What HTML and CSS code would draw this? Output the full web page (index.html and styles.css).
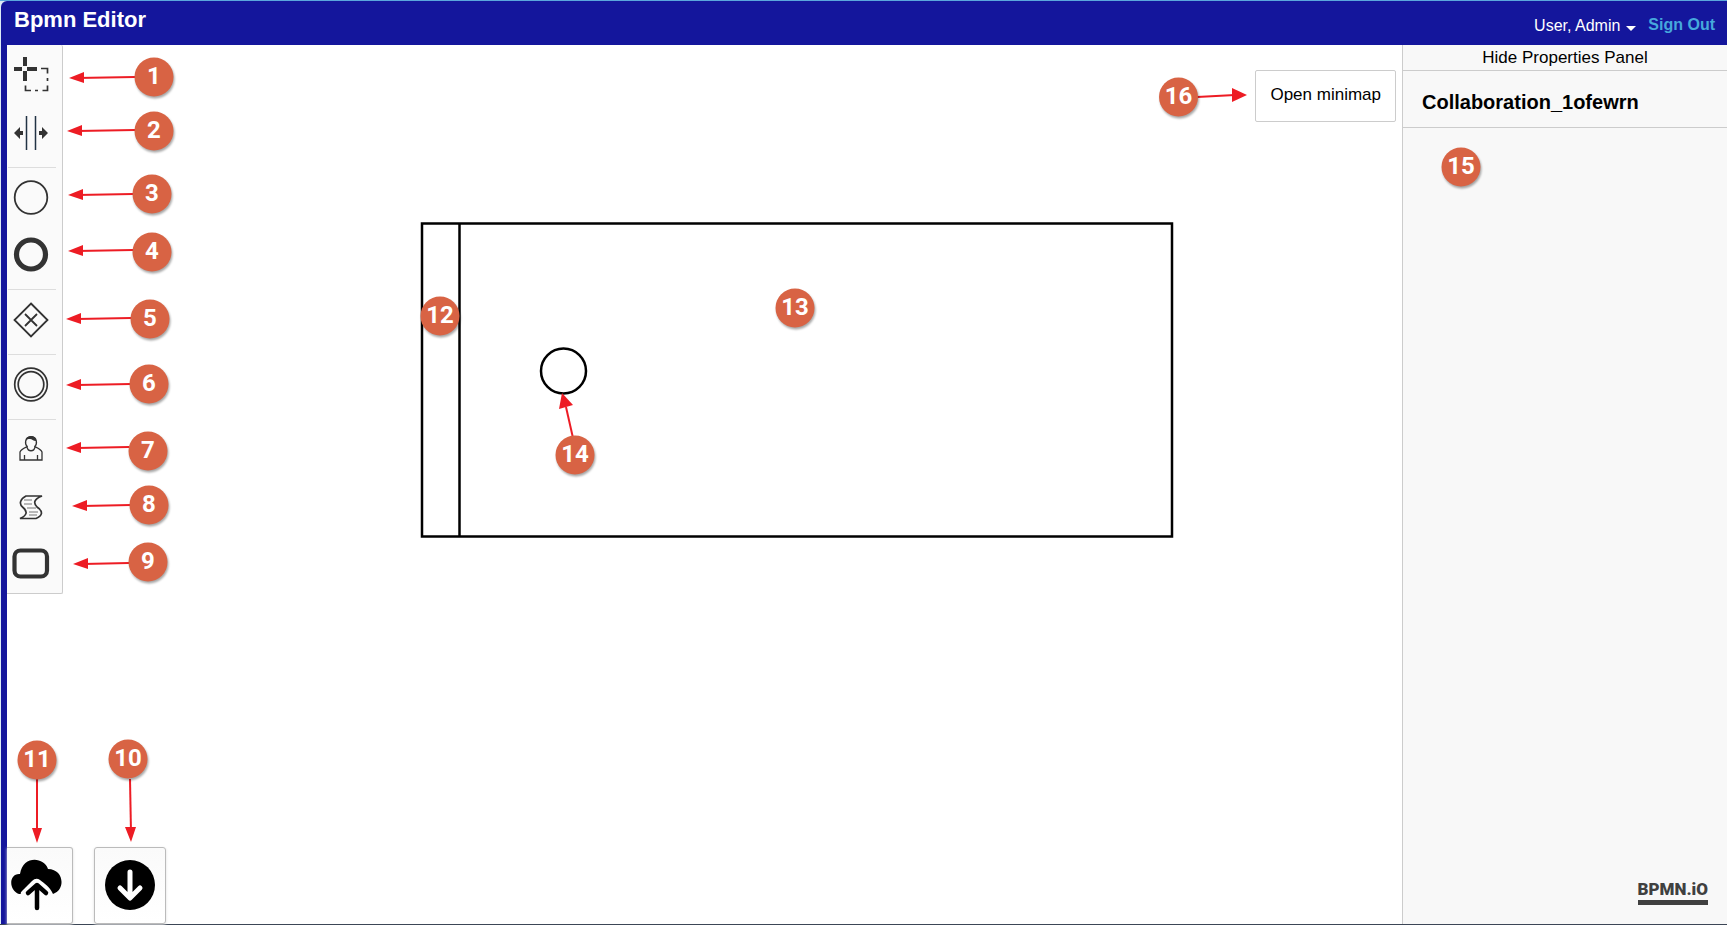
FILE: index.html
```html
<!DOCTYPE html>
<html lang="en">
<head>
<meta charset="utf-8">
<title>Bpmn Editor</title>
<link rel="stylesheet" href="styles.css">
</head>
<body>
<div class="app">
  <header class="header">
    <h1 class="brand">Bpmn Editor</h1>
    <nav class="account">
      <button class="user" type="button">User, Admin <span class="caret"></span></button>
      <a class="signout" href="#">Sign Out</a>
    </nav>
  </header>
  <div class="workspace">
    <main class="canvas">
      <svg class="diagram" aria-label="Diagram">
        <g fill="none" stroke="#000" stroke-width="2.5">
          <rect x="415" y="178.500" width="750" height="313"/>
          <path d="M452.500 178.500V491.500"/>
          <circle cx="556.500" cy="326" r="22.500"/>
        </g>
      </svg>
      <div class="palette">
        <button class="tool" type="button" aria-label="Lasso tool"><svg width="48" height="57"><path d="M18 9v9M18 23v10M7 21h8M20 21h10" stroke="#333" stroke-width="4"/><path d="M34 20.500h6.500v5M40.500 30v3M40.500 37.500v5h-5M31 42.500h-3M24 42.500h-5.500v-5" fill="none" stroke="#333" stroke-width="1.700"/></svg></button>
        <button class="tool" type="button" aria-label="Space tool"><svg width="48" height="57"><path d="M19.500 11v34M28.500 11v34" stroke="#234" stroke-width="1.500"/><path d="M7 28l6-6v4h3v4h-3v4zM41 28l-6-6v4h-3v4h3v4z" fill="#333"/></svg></button>
        <hr class="separator">
        <button class="tool" type="button" aria-label="Start event"><svg width="48" height="57"><circle cx="24" cy="27.500" r="16.300" fill="none" stroke="#333" stroke-width="1.800"/></svg></button>
        <button class="tool" type="button" aria-label="End event"><svg width="48" height="57"><circle cx="24" cy="27.500" r="14.500" fill="none" stroke="#333" stroke-width="5.200"/></svg></button>
        <hr class="separator">
        <button class="tool" type="button" aria-label="Gateway"><svg width="48" height="57"><path d="M24 11.500L40.500 28 24 44.500 7.500 28zM18 22l12 12M30 22L18 34" fill="none" stroke="#333" stroke-width="1.800"/></svg></button>
        <hr class="separator">
        <button class="tool" type="button" aria-label="Intermediate event"><svg width="48" height="57"><g fill="none" stroke="#333" stroke-width="1.700"><circle cx="24" cy="27.500" r="16.300"/><circle cx="24" cy="27.500" r="12.800"/></g></svg></button>
        <hr class="separator">
        <button class="tool" type="button" aria-label="User task"><svg width="48" height="57"><g fill="none" stroke="#333" stroke-width="1.300"><path d="M20.500 24.500c-2 1-6 2-7.500 5.500v8h22v-8c-1.500-3.500-5.500-4.500-7.500-5.500M17.500 38v-5M30.500 38v-5M20 25c1 5 7 5 8 0"/><path d="M20.500 25c-3-3-3-10 3.500-10s6.500 7 3.500 10"/></g><path d="M19 19c0-7 11-6 10 0-3 0-4-2-6-2-2 0-3 0-4 2z" fill="#333"/></svg></button>
        <button class="tool" type="button" aria-label="Script task"><svg width="48" height="57"><path d="M19 17H35c-8 3-9 7-5 11 7 5 5 9-1 11.500H13c7-3 8-7 3-11-5-4-2-9 3-11.500z" fill="none" stroke="#333" stroke-width="1.700"/><path d="M17 21h8M17 25h8M20 29h9M22 33h9M22 36h8" stroke="#777" stroke-width="1"/></svg></button>
        <button class="tool" type="button" aria-label="Call activity"><svg width="48" height="57"><rect x="7.500" y="14.500" width="32.500" height="26" rx="6" fill="none" stroke="#333" stroke-width="4.200"/></svg></button>
      </div>
      <svg class="callouts" aria-label="Tool callouts">
        <g class="arrow">
          <path d="M128 32L70 33"/><path d="M128 85L70 86"/><path d="M126 149L70 150"/><path d="M126 205L70 206"/><path d="M124 273L70 274"/><path d="M124 339L70 340"/><path d="M122 402L70 403"/><path d="M124 460L75 461"/><path d="M122 518L76 519"/><path d="M566 393L559 362"/>
        </g>
        <g class="head">
          <path d="M62 33l15-6v11z"/><path d="M60 86l15-6v11z"/><path d="M61 150l15-6v11z"/><path d="M61 206l15-6v11z"/><path d="M59 274l15-6v11z"/><path d="M59 340l15-6v11z"/><path d="M59 403l15-6v11z"/><path d="M65 461l15-6v11z"/><path d="M66 519l15-6v11z"/><path d="M555 348l-3 16 14-4z"/>
        </g>
        <g class="disc">
          <circle cx="147" cy="32" r="19.500"/><circle cx="147" cy="86" r="19.500"/><circle cx="145" cy="149" r="19.500"/><circle cx="145" cy="207" r="19.500"/><circle cx="143" cy="274" r="19.500"/><circle cx="142" cy="339" r="19.500"/><circle cx="141" cy="406" r="19.500"/><circle cx="142" cy="460" r="19.500"/><circle cx="141" cy="517" r="19.500"/><circle cx="433" cy="271" r="19.500"/><circle cx="788" cy="263" r="19.500"/><circle cx="568" cy="410" r="19.500"/>
        </g>
        <g class="number">
          <text x="147" y="39">1</text><text x="147" y="93">2</text><text x="145" y="156">3</text><text x="145" y="214">4</text><text x="143" y="281">5</text><text x="142" y="346">6</text><text x="141" y="413">7</text><text x="142" y="467">8</text><text x="141" y="524">9</text><text x="433" y="278">12</text><text x="788" y="270">13</text><text x="568" y="417">14</text>
        </g>
      </svg>
      <div class="minimap">
        <svg class="minimap-callout" width="96" height="52" aria-label="Minimap callout">
          <path class="arrow" d="M38 27L76 25"/><path class="head" d="M88 25l-15-7v14z"/>
          <circle class="disc" cx="19.500" cy="27" r="19.500"/><text class="number" x="19.500" y="34">16</text>
        </svg>
        <button class="minimap-toggle" type="button">Open minimap</button>
      </div>
      <div class="files">
        <div class="file">
          <svg class="file-callout" width="60" height="106" aria-label="Upload callout"><path class="arrow" d="M30 38V92"/><path class="head" d="M30 102l-5-15h10z"/><circle class="disc" cx="30" cy="19" r="19.500"/><text class="number" x="30" y="26">11</text></svg>
          <button class="file-button upload" type="button" aria-label="Upload"><svg width="52" height="52"><path d="M8 35C-3 31-2 14 9 15 12-4 33-2 37 10 53 10 55 31 42 35 39 28 33 24 29 21Q25 18 21 22L11 32Q9 34 10 35z"/><path d="M26 49V27M17 34l9-8 9 8" fill="none" stroke="#000" stroke-width="4.500" stroke-linecap="round" stroke-linejoin="round"/></svg></button>
        </div>
        <div class="file">
          <svg class="file-callout" width="60" height="106" aria-label="Download callout"><path class="arrow" d="M29 38L30 92"/><path class="head" d="M30 101l-6-15h11z"/><circle class="disc" cx="27" cy="18" r="19.500"/><text class="number" x="27" y="25">10</text></svg>
          <button class="file-button" type="button" aria-label="Download"><svg width="52" height="52"><circle cx="26" cy="26" r="25"/><path d="M26 13v25M16 29l10 10 10-10" fill="none" stroke="#fff" stroke-width="5" stroke-linecap="round" stroke-linejoin="round"/></svg></button>
        </div>
      </div>
    </main>
    <aside class="panel">
      <button class="panel-toggle" type="button">Hide Properties Panel</button>
      <h2 class="panel-title">Collaboration_1ofewrn</h2>
      <svg class="panel-callout" width="42" height="42" aria-label="Panel callout"><circle class="disc" cx="20" cy="20" r="19.500"/><text class="number" x="20" y="27">15</text></svg>
      <a class="logo" href="#">BPMN.iO</a>
    </aside>
  </div>
</div>
</body>
</html>
```
FILE: styles.css
```css
* { box-sizing: border-box; }
body {
  margin: 0;
  font-family: "Liberation Sans", Arial, sans-serif;
  font-size: 17px;
  color: #000;
  background: #dcebf6;
}
button { font: inherit; color: inherit; border: 0; padding: 0; background: none; cursor: pointer; }
a { text-decoration: none; }
.app {
  display: flex;
  flex-direction: column;
  height: 100vh;
  min-height: 740px;
  padding-left: 1px;
  border-top: 1px solid #5ba7dd;
  border-bottom: 1px solid #3c4656;
}
.header {
  display: flex;
  flex: none;
  justify-content: space-between;
  height: 44px;
  padding: 6px 12px 0 13px;
  border-top-left-radius: 6px;
  background: #14169c;
  color: #fff;
}
.brand { margin: 0; font-size: 22px; line-height: 26px; }
.account { display: flex; gap: 12px; padding-top: 6px; line-height: 24px; }
.user { display: flex; align-items: center; gap: 6px; font-size: 16px; height: 26px; }
.caret { margin-top: 4px; border: 5px solid transparent; border-top-color: #fff; border-bottom: 0; }
.signout { color: #46a8dc; font-size: 16px; font-weight: bold; line-height: 24px; }
.workspace { display: flex; flex: 1; min-height: 0; border-left: 6px solid #14169c; }
.canvas {
  display: flex;
  flex: 1;
  flex-wrap: wrap;
  justify-content: space-between;
  align-content: space-between;
  align-items: flex-start;
  position: relative;
  min-width: 0;
  background: #fff;
}
.diagram, .callouts { position: absolute; top: 0; left: 0; width: 100%; height: 100%; }
.callouts { pointer-events: none; }
.arrow { fill: none; stroke: #ed1c24; stroke-width: 2; }
.head { fill: #ed1c24; }
.disc { fill: #d86344; filter: drop-shadow(1px 2px 1px rgba(0, 0, 0, .35)); }
.number { fill: #fff; font-family: Roboto, "Liberation Sans", sans-serif; font-size: 24px; font-weight: bold; text-anchor: middle; }
.palette {
  display: flex;
  flex-direction: column;
  position: relative;
  width: 56px;
  padding: 3px 7px 0 0;
  border: 1px solid #ccc;
  border-width: 0 1px 1px 0;
  border-radius: 0 2px 2px 0;
  background: #fafafa;
}
.tool { height: 57px; }
.tool svg, .file-button svg, .file-callout, .minimap-callout { display: block; }
.separator { width: 48px; margin: 5px 0 2px 1px; border: 0; border-top: 1px solid #ddd; }
.minimap { display: flex; position: relative; margin: 25px 6px 0 0; }
.minimap-callout { overflow: visible; }
.minimap-toggle {
  height: 52px;
  padding: 0 14px 2px;
  border: 1px solid #ccc;
  border-radius: 2px;
}
.files { display: flex; gap: 21px; position: relative; width: 100%; }
.file { display: flex; flex-direction: column; }
.file-callout { overflow: visible; }
.file-button {
  display: flex;
  justify-content: center;
  align-items: center;
  width: 72px;
  height: 77px;
  padding-bottom: 1px;
  border: 1px solid #bbb;
  border-radius: 3px;
  background: linear-gradient(#fafafa, #fff);
  box-shadow: 0 1px 3px #ddd;
}
.upload { width: 66px; padding-right: 8px; padding-left: 3px; border-left: 0; border-radius: 0 3px 3px 0; }
.file + .file .file-callout { margin-left: 7px; }
.panel {
  display: flex;
  flex: none;
  flex-direction: column;
  width: 325px;
  border-left: 1px solid #ccc;
  background: #f8f8f8;
}
.panel-toggle { height: 26px; border-bottom: 1px solid #ccc; line-height: 22px; }
.panel-title {
  margin: 0;
  padding: 19px 19px 13px;
  border-bottom: 1px solid #ccc;
  font-size: 20px;
  line-height: 24px;
}
.panel-callout { margin: 19px 0 0 38px; overflow: visible; }
.logo {
  margin: auto 19px 19px auto;
  border-bottom: 5px solid #404040;
  color: #404040;
  font-family: Roboto, "Liberation Sans", sans-serif;
  font-size: 17px;
  font-weight: 900;
  line-height: 22px;
}
```
